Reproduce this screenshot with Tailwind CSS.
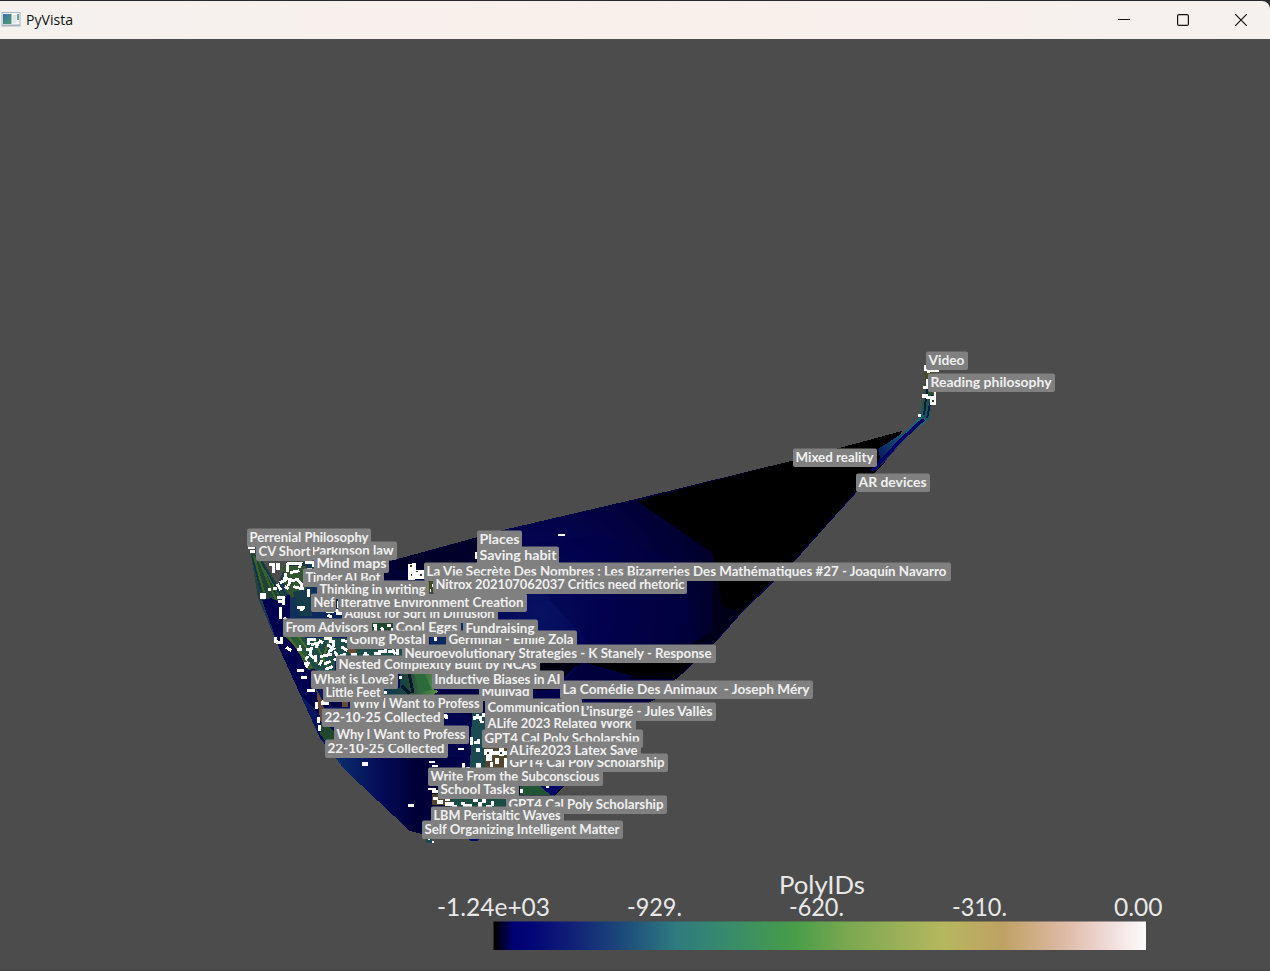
<!DOCTYPE html>
<html lang="en">
<head>
<meta charset="utf-8">
<title>PyVista</title>
<script src="https://cdn.jsdelivr.net/npm/@tailwindcss/browser@4"></script>
</head>
<body class="h-screen overflow-hidden bg-[#29292b]">
<div class="flex h-full flex-col overflow-hidden pt-px">
  <header class="flex h-[38px] shrink-0 items-center rounded-tr-lg bg-linear-to-r from-[#f4f1ee] via-[#faf0eb] to-[#f5f1ef]">
    <svg class="ml-px h-4 w-5 shrink-0" viewBox="0 0 20 16"><rect x=".5" y="0" width="19" height="14.500" fill="#a9b3c0"/><rect x="1.500" y="1" width="17" height="11.500" fill="#f4f6f6"/><rect x="2" y="2" width="8.500" height="10" fill="url(#ic)"/><rect x="11.500" y="3" width="4" height="8" fill="#dfe6e4"/><rect x="16" y="2" width="2" height="6" fill="#72a59c"/><defs><linearGradient id="ic" x2="1" y2="1"><stop stop-color="#3b6fa8"/><stop offset="1" stop-color="#4ba06b"/></linearGradient></defs></svg>
    <svg class="ml-[5px] h-6 w-14" viewBox="0 0 56 24"><text class="font-['Open_Sans',sans-serif] text-[14.5px]" x="0" y="17" textLength="47" lengthAdjust="spacingAndGlyphs" fill="#111">PyVista</text></svg>
    <div class="ml-auto flex items-center gap-[46.500px] pr-[23px]">
      <svg class="size-3" viewBox="0 0 12 12"><path d="M0 5.500H12" stroke="#111" fill="none"/></svg>
      <svg class="size-3" viewBox="0 0 12 12"><rect x=".6" y=".6" width="10.800" height="10.800" rx="1.500" stroke="#111" stroke-width="1.200" fill="none"/></svg>
      <svg class="size-3" viewBox="0 0 12 12"><path d="M0 0L12 12M12 0L0 12" stroke="#111" stroke-width="1.200" fill="none"/></svg>
    </div>
  </header>
  <main class="min-h-0 flex-1 bg-[#4c4c4c]">
    <svg class="block h-[932px] w-full" viewBox="0 39 1270 932">
      <defs>
        <linearGradient id="earth"><stop offset="0" stop-color="#000"/><stop offset=".008" stop-color="#000018"/><stop offset=".03" stop-color="#000074"/><stop offset=".06" stop-color="#030676"/><stop offset=".12" stop-color="#112077"/><stop offset=".2" stop-color="#1d4b7b"/><stop offset=".28" stop-color="#2f7b80"/><stop offset=".36" stop-color="#388b6b"/><stop offset=".46" stop-color="#479d48"/><stop offset=".54" stop-color="#78a850"/><stop offset=".69" stop-color="#b6b75e"/><stop offset=".78" stop-color="#bfa163"/><stop offset=".88" stop-color="#dfbba9"/><stop offset=".95" stop-color="#f2dfde"/><stop offset="1" stop-color="#fdfbfb"/></linearGradient>
        <radialGradient id="blue" gradientUnits="userSpaceOnUse" cx="540" cy="612" r="190"><stop offset="0" stop-color="#071263"/><stop offset=".35" stop-color="#030352"/><stop offset="1" stop-color="#000026"/></radialGradient>
        <linearGradient id="left" x2="1" y2="1"><stop stop-color="#304d28"/><stop offset=".2" stop-color="#10305c"/><stop offset=".5" stop-color="#040a60"/><stop offset="1" stop-color="#00003c"/></linearGradient>
        <linearGradient id="green"><stop stop-color="#0b3656"/><stop offset=".25" stop-color="#20463a"/><stop offset=".6" stop-color="#5c9a48"/><stop offset="1" stop-color="#37804c"/></linearGradient>
        <linearGradient id="tip" x2="0" y2="1"><stop stop-color="#4b4a24"/><stop offset=".5" stop-color="#24523a"/><stop offset="1" stop-color="#175a6a"/></linearGradient>
        <linearGradient id="neck" x1="1" y1="0" x2="0" y2="1"><stop stop-color="#29716f"/><stop offset=".5" stop-color="#154f70"/><stop offset="1" stop-color="#03035c"/></linearGradient>
        <linearGradient id="low" x2="1"><stop stop-color="#09306c"/><stop offset=".35" stop-color="#040a58"/><stop offset=".6" stop-color="#000036"/><stop offset="1" stop-color="#00004e"/></linearGradient>
      </defs>
      <g shape-rendering="crispEdges">
        <path fill="url(#blue)" d="M314 582L503 530L640 498L795 460L902 431L885 462L858 490L828 523L795 560L740 614L716 641L676 679L655 699L622 720L562 789L553 797H510L480 835L430 836L410 831L345 770L320 738L300 690Z"/>
        <path fill="#00002a" d="M396 560L503 530V570H396Z"/>
        <path fill="#000048" d="M520 545L600 535L680 560L700 640L600 655L550 600Z" opacity=".35"/>
        <path fill="#000" d="M637 501L795 460L902 431L885 462L858 490L828 523L795 560L740 612L722 606L713 553Z"/>
        <path fill="#000018" d="M713 560L722 606L740 612L716 641L690 645L712 630Z"/>
        <path fill="#000010" d="M540 662H695L676 679H624L575 666L552 690H520Z"/>
        <path fill="#00003c" d="M582 662L632 676L625 684H560Z"/>
        <path fill="#000" d="M582 662H695L678 677L632 675Z"/>
        <path d="M858 490L828 523L795 560L740 614L716 641L676 679" stroke="#000044" fill="none"/>
        <path fill="url(#neck)" d="M878 449L906 431L924 412L930 415L925 423L908 436L876 471L880 457Z"/>
        <path d="M927 416L900 441L872 471" stroke="#020266" stroke-width="3.500" fill="none"/>
        <path fill="url(#tip)" d="M925 372L934 372L933 400L929 420L919 419L924 395Z"/>
        <path d="M929 376L926 398L924 415M932 395L927 418" stroke="#071a42" stroke-width="2" fill="none"/>
        <path fill="url(#left)" d="M250 550L262 562L275 590L287 562H312L345 580L420 580L480 640V690L420 700L480 720L490 835H430L410 831L345 770L320 738L280 650L258 598Z"/>
        <path fill="url(#low)" d="M335 757H470L462 836H430L410 831L345 770Z"/>
        <path fill="#010150" d="M262 600L290 595L290 640L318 670L320 715L300 694L280 650Z"/>
        <path fill="#1f4434" d="M250 550L262 560L286 598L279 602L262 594Z"/>
        <path d="M254 556L264 592M258 558L276 600M265 570L280 596" stroke="#3a602c" stroke-width="2" fill="none"/>
        <path d="M252 556L261 592M262 562L283 600" stroke="#0b3550" stroke-width="1.500" fill="none"/>
        <path fill="#30552f" d="M283 566H306V590L292 598L285 590Z"/>
        <path fill="#163c4c" d="M293 592L312 588L312 616H300Z"/>
        <path fill="#2a5a34" d="M284 636L304 636L320 668L308 670L296 648Z"/>
        <path fill="#1c4b48" d="M300 638H402V656H335V680L312 668Z"/>
        <path d="M288 636L312 668M298 636L318 664M314 640L328 668M330 638L322 660" stroke="#4a6b2e" stroke-width="2" fill="none"/>
        <path fill="#6b4a34" d="M316 688L322 700L325 714L322 730L319 712ZM344 647L357 650L354 658ZM342 700H348V707H342Z"/>
        <path fill="#000048" d="M324 700H342V707H324Z"/>
        <path fill="#20472c" d="M322 718L334 732L335 742L326 742L320 734ZM372 623H393V633H372Z"/>
        <path fill="url(#green)" d="M400 673H434V690L480 697H384V688H400Z"/>
        <path d="M409 673L413 693M402 686L410 694" stroke="#07182e" stroke-width="3" fill="none"/>
        <path fill="#2b6b3b" d="M414 673L424 673L432 690L420 692Z"/>
        <path fill="#000042" d="M440 690H480V699H428Z"/>
        <path fill="#0b2860" d="M430 636H447V645H430ZM461 622H465V631H461Z"/>
        <path fill="#1b4b50" d="M472 713H485V770H470Z"/>
        <path fill="#51462d" d="M485 748H507V770H485ZM432 794H450V805H432Z"/>
        <path fill="#1b4c41" d="M450 797H506V807H450Z"/>
        <path fill="#1f5434" d="M520 786H545L555 791L550 795H520Z"/>
        <path fill="#030868" d="M540 786H562L553 797Z"/>
        <path fill="#40481e" d="M429 581H433V593H429Z"/>
        <path fill="#020b67" d="M468 838H480L477 841H470Z"/>
        <path fill="#18494d" d="M426 837H432V843H426Z"/>
        <path stroke="#00003e" d="M585 699.500H655"/>
        <g transform="translate(240 540) scale(.33333)" fill="none" stroke="#fff" stroke-width="9">
          <path d="M24 24H46M30 34H46M140 70H184M144 70V96M150 98L178 92M184 66L178 84M196 68H222V82M200 88H216M136 98V120L120 128M128 114L150 118L146 138M150 124L172 118L184 132L188 150M112 132L122 150M160 140L186 146M88 74H102V98M84 150H94M98 146H112M134 140L146 146"/>
          <path d="M60 167H78M112 173H132V196M114 184H130M172 202H196M180 211L190 206M122 200V236M132 232L140 240M206 148V172M212 170H226M258 216L276 214L300 210M262 226L276 230M288 222H306M296 184V204"/>
          <path d="M108 292V310M108 307H120M126 290V312M104 304H114M138 322L154 332M172 330H186M178 320H184M206 294V316M206 298H228M212 314L234 310L228 324M236 302L250 308M252 296H272V308M262 314L280 326L264 336M280 300V320M198 330L214 326L210 344L222 354M204 348L196 360M192 370H208M198 382L206 366M226 344V366M240 350L258 346L276 342M246 360L238 376M252 372L272 364M284 334L296 356M282 362L300 348L318 346M256 388L278 380M304 300L326 306L336 322M304 320L322 332M314 338V352M334 342L350 344M370 346H386M376 336V346M402 340H422M414 334H432M438 322V340M444 336H462M456 328L466 342M472 328V346"/>
          <path d="M172 392H192M182 413H200M202 453H226M230 486V508M246 482L256 490M244 491H268M236 532V550M239 556V574M476 414H486M432 458H442M616 522V534"/>
          <path d="M398 256H408V272M424 262L430 272M442 256H454M452 270H462M576 136H582M570 152H574"/>
        </g>
        <g id="specks" fill="#fff"></g>
        <g id="holes" fill="#303b26"></g>
      </g>
      <g id="labels" class="font-['Lato',sans-serif] text-[13.5px] font-bold"></g>
      <rect x="493.500" y="921.500" width="652.500" height="28.500" fill="url(#earth)"/>
      <g class="font-['Lato',sans-serif] text-[25.5px]" fill="#e8e8e8">
        <text x="779" y="894" textLength="86" lengthAdjust="spacingAndGlyphs">PolyIDs</text>
        <text x="437" y="915.500" textLength="113" lengthAdjust="spacingAndGlyphs">-1.24e+03</text>
        <text x="627" y="915.500" textLength="55" lengthAdjust="spacingAndGlyphs">-929.</text>
        <text x="789" y="915.500" textLength="55" lengthAdjust="spacingAndGlyphs">-620.</text>
        <text x="952" y="915.500" textLength="55" lengthAdjust="spacingAndGlyphs">-310.</text>
        <text x="1114" y="915.500" textLength="48.500" lengthAdjust="spacingAndGlyphs">0.00</text>
      </g>
      <path d="M0 970.500H1270" stroke="#424242"/>
    </svg>
  </main>
</div>
<script>
const NS = 'http://www.w3.org/2000/svg';
const add = (parent, tag, attrs) => {
  const el = document.createElementNS(NS, tag);
  for (const k in attrs) el.setAttribute(k, attrs[k]);
  return parent.appendChild(el);
};
const rects = (id, s) => s.trim().split(/\s+/).forEach(r => {
  const [x, y, width, height] = r.split(',');
  add(document.getElementById(id), 'rect', {x, y, width, height});
});
// Point markers of the scene: x,y,width,height
rects('specks', `
276,563,4,7 260,593,6,6
434,636,3,5 445,715,3,4
408,564,7,16 412,563,4,16 416,570,9,9 475,552,3,7 558,534,7,2 476,714,3,5 473,716,3,4 479,716,3,5 482,713,3,4 480,721,4,2
470,737,3,8 474,741,6,3 477,739,3,5 458,748,6,2 476,748,4,4 462,763,3,5 466,767,4,3 476,763,5,7 484,749,9,6 486,755,6,6 493,751,14,4 499,748,5,8 490,762,3,5 495,758,4,6 504,758,3,10
362,762,6,4 429,761,6,2 432,765,6,2 408,804,6,3 428,788,8,2 432,790,7,3 433,797,5,3 437,800,6,4 445,798,5,3 445,802,9,4 452,805,5,2 461,802,4,3 463,804,9,3 473,799,5,3 478,802,4,5 482,799,4,4 486,805,6,2 491,801,3,5 520,789,3,4 546,786,3,2 428,837,2,3 432,841,2,2
924,365,4,6 927,369,3,4 930,370,9,2 926,379,2,9 923,386,6,3 922,394,6,4 926,396,9,3 930,397,6,8 934,392,2,5 918,414,3,3`);
rects('holes', `
410,565,2,2 411,574,1,2 416,571,2,1 420,574,2,2 932,400,2,2 487,752,2,2 500,752,2,2`);
// Labels, back to front: box left, box right, baseline, text left, text right, text
[
 [309,397,555,312,393,'Parkinson law'],
 [247,371,542,250,368,'Perrenial Philosophy'],
 [256,313,556,259,310,'CV Short'],
 [303,384,582,306,380,'Tinder AI Bot'],
 [314,389,568,317,386,'Mind maps'],
 [342,498,618,345,494,'Adjust for Sqrt in Diffusion'],
 [338,527,607,341,523,'Iterative Environment Creation'],
 [317,429,594,320,425,'Thinking in writing'],
 [311,336,607,314,334,'Nef'],
 [477,522,544,480,519,'Places'],
 [477,559,560,480,556,'Saving habit'],
 [424,951,576,427,946,'La Vie Secrète Des Nombres : Les Bizarreries Des Mathématiques #27 - Joaquín Navarro'],
 [433,687,589,436,684,'Nitrox 202107062037 Critics need rhetoric'],
 [393,461,632,396,457,'Cool Eggs'],
 [347,429,644,350,425,'Going Postal'],
 [283,372,632,286,368,'From Advisors'],
 [446,577,644,449,573,'Germinal - Emile Zola'],
 [463,538,633,466,534,'Fundraising'],
 [336,540,669,339,536,'Nested Complexity Built by NCAs'],
 [402,716,658,405,711,'Neuroevolutionary Strategies - K Stanely - Response'],
 [350,483,708,353,479,'Why I Want to Profess'],
 [311,398,684,314,394,'What is Love?'],
 [323,384,697,326,380,'Little Feet'],
 [322,444,722,325,440,'22-10-25 Collected'],
 [325,448,753,328,444,'22-10-25 Collected'],
 [334,469,739,337,465,'Why I Want to Profess'],
 [479,533,696,482,529,'Mullvad'],
 [432,564,684,435,560,'Inductive Biases in AI'],
 [560,813,694,563,809,'La Comédie Des Animaux \u00a0- Joseph Méry'],
 [485,636,728,488,631,'ALife 2023 Related Work'],
 [485,582,712,488,579,'Communication'],
 [579,716,716,581,712,'L’insurgé - Jules Vallès'],
 [482,643,743,485,639,'GPT4 Cal Poly Scholarship'],
 [507,668,767,510,664,'GPT4 Cal Poly Scholarship'],
 [507,641,755,510,637,'ALife2023 Latex Save'],
 [428,603,781,431,599,'Write From the Subconscious'],
 [438,519,794,441,515,'School Tasks'],
 [506,667,809,509,663,'GPT4 Cal Poly Scholarship'],
 [431,564,820,434,560,'LBM Peristaltic Waves'],
 [422,623,834,425,619,'Self Organizing Intelligent Matter'],
 [926,968,365,929,964,'Video'],
 [928,1055,387,931,1051,'Reading philosophy'],
 [793,877,462,796,873,'Mixed reality'],
 [856,930,487,859,926,'AR devices'],
].forEach(([l, r, b, tl, tr, s]) => {
  const g = document.getElementById('labels');
  add(g, 'rect', {x: l, y: b - 13.500, width: r - l, height: 18.500, rx: 2, fill: '#808080'});
  add(g, 'text', {x: tl - .5, y: b, textLength: tr - tl + 1, lengthAdjust: 'spacingAndGlyphs', fill: '#f0f0f0'}).textContent = s;
});
</script>
</body>
</html>
